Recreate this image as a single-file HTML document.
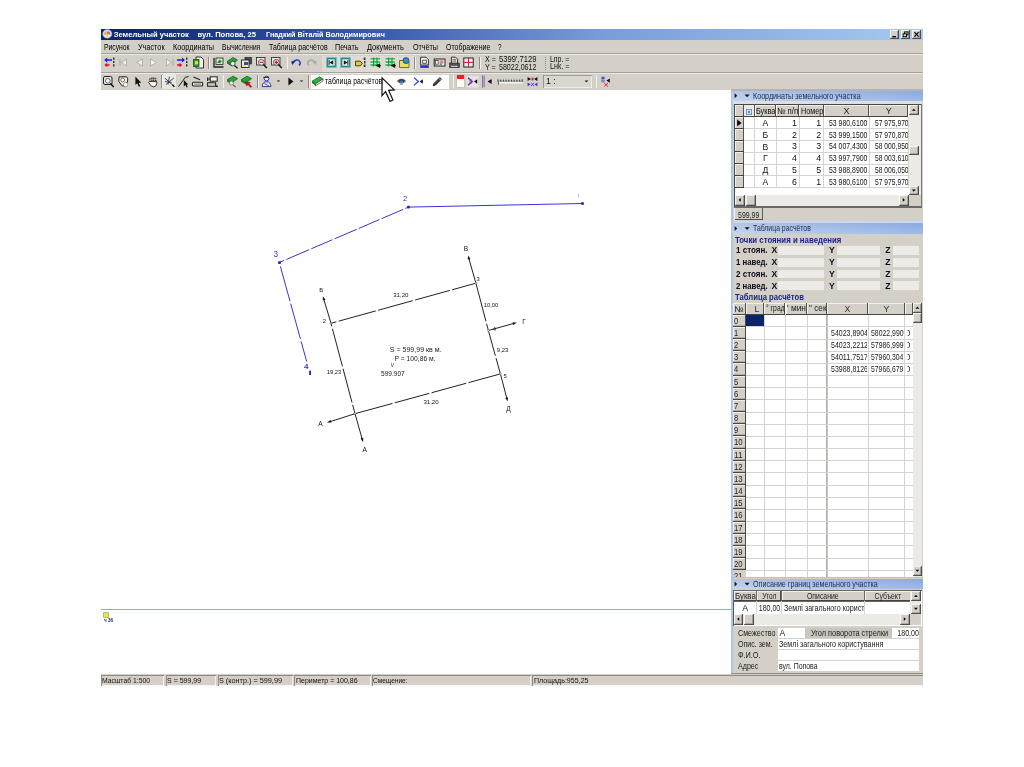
<!DOCTYPE html>
<html lang="ru"><head><meta charset="utf-8"><title>Земельный участок</title>
<style>
html,body{margin:0;padding:0;background:#fff}
body{width:1024px;height:767px;position:relative;overflow:hidden;font-family:"Liberation Sans",sans-serif;font-size:8px;color:#000}
.a{position:absolute;display:block}
.t{position:absolute;white-space:nowrap;display:block}
svg{overflow:visible}
svg text{font-family:"Liberation Sans",sans-serif}
#root{position:absolute;left:0;top:0;width:1024px;height:767px;will-change:transform}
</style></head><body><div id="root">
<div class="a" style="left:101px;top:29px;width:821.5px;height:657px;background:#d4d0c8;"></div>
<div class="a" style="left:101px;top:29px;width:821.5px;height:11px;background:linear-gradient(to right,#0a246a 0%,#3a5cb0 34%,#7a9cd8 61%,#a6caf0 100%);"></div>
<svg class="a" style="left:101.6px;top:29.3px" width="11" height="10" viewBox="0 0 11 10">
<ellipse cx="5.3" cy="4.9" rx="4.7" ry="4.4" fill="#d4dcec" stroke="#8a9ac8" stroke-width="0.5"/><ellipse cx="5.3" cy="4.9" rx="3.2" ry="3.1" fill="#ece9d0"/><path d="M5.3 4.9 L5.3 1.9 A3 3 0 0 1 8.2 5.7 Z" fill="#9a78c8"/><path d="M5.3 4.9 L2.4 5.9 A3 3 0 0 1 5.3 1.9 Z" fill="#e0a040"/><path d="M4.2 2.4 H6 V8 H4.2 Z" fill="#f4e060"/><path d="M4.9 3 H6 V5.4 H4.9 Z" fill="#e86848"/>
</svg>
<span class="t" style="font-size:7.6px;line-height:9.6px;left:113.7px;top:30px;color:#fff;font-weight:bold;">Земельный участок</span>
<span class="t" style="font-size:7.6px;line-height:9.6px;left:197.5px;top:30px;color:#fff;font-weight:bold;">вул. Попова, 25</span>
<span class="t" style="font-size:7.6px;line-height:9.6px;left:265.6px;top:30px;transform:scaleX(0.957);transform-origin:0 50%;color:#fff;font-weight:bold;">Гнадкий Віталій Володимирович</span>
<div class="a" style="left:890px;top:30px;width:9.3px;height:9px;background:#d4d0c8;box-shadow:inset -0.8px -0.8px 0 #404040,inset 0.8px 0.8px 0 #fff,inset -1.6px -1.6px 0 #808080;"></div>
<svg class="a" style="left:890px;top:30px" width="9.3" height="9" viewBox="0 0 9.3 9">
<rect x="2.4" y="6" width="3.6" height="1.3" fill="#000"/>
</svg>
<div class="a" style="left:900.5px;top:30px;width:9.3px;height:9px;background:#d4d0c8;box-shadow:inset -0.8px -0.8px 0 #404040,inset 0.8px 0.8px 0 #fff,inset -1.6px -1.6px 0 #808080;"></div>
<svg class="a" style="left:900.5px;top:30px" width="9.3" height="9" viewBox="0 0 9.3 9">
<rect x="3.6" y="1.9" width="3.4" height="2.9" fill="none" stroke="#000" stroke-width="0.9"/><rect x="2.1" y="3.8" width="3.4" height="2.9" fill="#d4d0c8" stroke="#000" stroke-width="0.9"/>
</svg>
<div class="a" style="left:912.2px;top:30px;width:9.3px;height:9px;background:#d4d0c8;box-shadow:inset -0.8px -0.8px 0 #404040,inset 0.8px 0.8px 0 #fff,inset -1.6px -1.6px 0 #808080;"></div>
<svg class="a" style="left:912.2px;top:30px" width="9.3" height="9" viewBox="0 0 9.3 9">
<path d="M2.4 2.2 L6.6 6.6 M6.6 2.2 L2.4 6.6" stroke="#000" stroke-width="1.15" fill="none"/>
</svg>
<span class="t" style="font-size:8.6px;line-height:10.6px;left:104.4px;top:41.6px;transform:scaleX(0.789);transform-origin:0 50%;color:#000;">Рисунок</span>
<span class="t" style="font-size:8.6px;line-height:10.6px;left:138.3px;top:41.6px;transform:scaleX(0.847);transform-origin:0 50%;color:#000;">Участок</span>
<span class="t" style="font-size:8.6px;line-height:10.6px;left:173px;top:41.6px;transform:scaleX(0.848);transform-origin:0 50%;color:#000;">Координаты</span>
<span class="t" style="font-size:8.6px;line-height:10.6px;left:222px;top:41.6px;transform:scaleX(0.772);transform-origin:0 50%;color:#000;">Вычисления</span>
<span class="t" style="font-size:8.6px;line-height:10.6px;left:269.2px;top:41.6px;transform:scaleX(0.811);transform-origin:0 50%;color:#000;">Таблица расчётов</span>
<span class="t" style="font-size:8.6px;line-height:10.6px;left:335.3px;top:41.6px;transform:scaleX(0.831);transform-origin:0 50%;color:#000;">Печать</span>
<span class="t" style="font-size:8.6px;line-height:10.6px;left:366.9px;top:41.6px;transform:scaleX(0.866);transform-origin:0 50%;color:#000;">Документь</span>
<span class="t" style="font-size:8.6px;line-height:10.6px;left:412.8px;top:41.6px;transform:scaleX(0.833);transform-origin:0 50%;color:#000;">Отчёты</span>
<span class="t" style="font-size:8.6px;line-height:10.6px;left:445.6px;top:41.6px;transform:scaleX(0.810);transform-origin:0 50%;color:#000;">Отображение</span>
<span class="t" style="font-size:8.6px;line-height:10.6px;left:498px;top:41.6px;transform:scaleX(0.732);transform-origin:0 50%;color:#000;">?</span>
<div class="a" style="left:101px;top:53px;width:821.5px;height:1px;background:#a4a29c;"></div>
<div class="a" style="left:101px;top:54px;width:821.5px;height:1px;background:#eceae5;"></div>
<div class="a" style="left:101px;top:72px;width:821.5px;height:1px;background:#a4a29c;"></div>
<div class="a" style="left:101px;top:73px;width:821.5px;height:1px;background:#eceae5;"></div>
<div class="a" style="left:321.5px;top:55.5px;width:92px;height:16px;background:#dedbd4;"></div>
<svg class="a" style="left:103px;top:55.8px" width="13" height="13" viewBox="0 0 13 13">
<path d="M9 3.2 H4.2 V1.6 L1.2 4 L4.2 6.4 V4.8 H9 Z" fill="#1020e0"/><path d="M6.5 8.2 H4.2 V6.8 L1.4 9 L4.2 11.2 V9.8 H6.5 Z" fill="#e01020"/><path d="M10.8 1.5 V11.5" stroke="#000" stroke-width="1.1" stroke-dasharray="2.2 1.2"/>
</svg>
<svg class="a" style="left:117.3px;top:55.8px" width="13" height="13" viewBox="0 0 13 13">
<path d="M3 3 V10" stroke="#a8a6a0" stroke-width="1"/><path d="M9.5 3 L4.5 6.5 L9.5 10 Z" fill="#f2f0ec" stroke="#a8a6a0" stroke-width="0.8"/>
</svg>
<svg class="a" style="left:132.7px;top:55.8px" width="13" height="13" viewBox="0 0 13 13">
<path d="M9.5 3 L3.5 6.5 L9.5 10 Z" fill="#f2f0ec" stroke="#a8a6a0" stroke-width="0.8"/>
</svg>
<svg class="a" style="left:147.1px;top:55.8px" width="13" height="13" viewBox="0 0 13 13">
<path d="M3.5 3 L9.5 6.5 L3.5 10 Z" fill="#f2f0ec" stroke="#a8a6a0" stroke-width="0.8"/>
</svg>
<svg class="a" style="left:162.5px;top:55.8px" width="13" height="13" viewBox="0 0 13 13">
<path d="M10 3 V10" stroke="#a8a6a0" stroke-width="1"/><path d="M3.5 3 L8.5 6.5 L3.5 10 Z" fill="#f2f0ec" stroke="#a8a6a0" stroke-width="0.8"/>
</svg>
<svg class="a" style="left:176.2px;top:55.8px" width="13" height="13" viewBox="0 0 13 13">
<path d="M1 3.2 H6 V1.6 L9 4 L6 6.4 V4.8 H1 Z" fill="#1020e0"/><path d="M1 8.2 H3.5 V6.8 L6.3 9 L3.5 11.2 V9.8 H1 Z" fill="#e01020"/><path d="M10.8 1.5 V11.5" stroke="#000" stroke-width="1.1" stroke-dasharray="2.2 1.2"/>
</svg>
<svg class="a" style="left:191.5px;top:55.8px" width="13" height="13" viewBox="0 0 13 13">
<path d="M4 1 H9 L11.5 3.5 V12 H4 Z" fill="#f4f4f0" stroke="#222" stroke-width="0.9"/><rect x="1.5" y="3.5" width="5.5" height="7" fill="#2c9a2c" stroke="#0a4a0a" stroke-width="0.7"/><rect x="3" y="5.2" width="3" height="3.2" fill="#e8e040"/>
</svg>
<div class="a" style="left:207.9px;top:56.5px;width:0.8px;height:12px;background:#8c8a84;"></div>
<div class="a" style="left:208.7px;top:56.5px;width:0.8px;height:12px;background:#f4f2ee;"></div>
<svg class="a" style="left:211.7px;top:55.8px" width="13" height="13" viewBox="0 0 13 13">
<path d="M2 2 V11 H11.5" fill="none" stroke="#222" stroke-width="1.3"/><rect x="4" y="2" width="7" height="6.5" fill="#e8e8e0" stroke="#222" stroke-width="0.8"/><path d="M5 6.5 L7.5 3.5 L10 5.2 L8 7.5 Z" fill="#1c9a30"/>
</svg>
<svg class="a" style="left:226px;top:55.8px" width="13" height="13" viewBox="0 0 13 13">
<path d="M1 5.5 L7 1.5 L11.5 4 L6 8.5 Z" fill="#22a832" stroke="#0c5a14" stroke-width="0.7"/><path d="M1 5.5 V7.5 L6 10.5 V8.5" fill="#157a22"/><circle cx="6.8" cy="7.6" r="2.3" fill="#e8f0e8" stroke="#333" stroke-width="0.8"/><path d="M8.5 9.5 L11.5 12.2" stroke="#111" stroke-width="1.3"/>
</svg>
<svg class="a" style="left:240.4px;top:55.8px" width="13" height="13" viewBox="0 0 13 13">
<rect x="5" y="1.5" width="6.5" height="6.5" fill="#444a58" stroke="#222" stroke-width="0.7"/><rect x="1.5" y="4" width="7.5" height="7.5" fill="#ecece4" stroke="#222" stroke-width="0.9"/><rect x="4" y="6" width="4" height="3" fill="#3a4a8a"/><rect x="2.6" y="9" width="3" height="1.8" fill="#e8e040"/>
</svg>
<svg class="a" style="left:255.4px;top:55.8px" width="13" height="13" viewBox="0 0 13 13">
<rect x="1.5" y="1.5" width="8.5" height="7.5" fill="#eceae4" stroke="#333" stroke-width="0.9"/><circle cx="6.3" cy="6.3" r="2.9" fill="#f4e8e8" stroke="#444" stroke-width="0.8"/><path d="M8.4 8.6 L11.8 12" stroke="#111" stroke-width="1.4"/><path d="M4.6 6.3 H8" stroke="#e01020" stroke-width="1.2"/>
</svg>
<svg class="a" style="left:270.1px;top:55.8px" width="13" height="13" viewBox="0 0 13 13">
<rect x="1.5" y="1.5" width="8.5" height="7.5" fill="#eceae4" stroke="#333" stroke-width="0.9"/><circle cx="6.3" cy="6.3" r="2.9" fill="#f4e8e8" stroke="#444" stroke-width="0.8"/><path d="M8.4 8.6 L11.8 12" stroke="#111" stroke-width="1.4"/><path d="M4.6 6.3 H8 M6.3 4.6 V8" stroke="#e01020" stroke-width="1.2"/>
</svg>
<div class="a" style="left:286.5px;top:56.5px;width:0.8px;height:12px;background:#8c8a84;"></div>
<div class="a" style="left:287.3px;top:56.5px;width:0.8px;height:12px;background:#f4f2ee;"></div>
<svg class="a" style="left:289.7px;top:55.8px" width="13" height="13" viewBox="0 0 13 13">
<path d="M3.2 6.5 C4 3.5 8.5 3 9.8 5.5 C10.6 7.2 10 8.6 9 9.3" fill="none" stroke="#2a3cc0" stroke-width="1.5"/><path d="M1.2 5.2 L5.6 5.2 L2.2 9 Z" fill="#1a2890"/>
</svg>
<svg class="a" style="left:305px;top:55.8px" width="13" height="13" viewBox="0 0 13 13">
<path d="M9.8 6.5 C9 3.5 4.5 3 3.2 5.5 C2.4 7.2 3 8.6 4 9.3" fill="none" stroke="#a8a6a0" stroke-width="1.5"/><path d="M11.8 5.2 L7.4 5.2 L10.8 9 Z" fill="#a8a6a0"/>
</svg>
<svg class="a" style="left:324.5px;top:55.8px" width="13" height="13" viewBox="0 0 13 13">
<rect x="1.2" y="1.2" width="10.6" height="10.6" fill="#38c8c8"/><rect x="2.8" y="2.8" width="7.4" height="7.4" fill="#f0f0ec" stroke="#1c5a5a" stroke-width="0.9"/><path d="M8.2 4.2 L4.4 6.5 L8.2 8.8 Z" fill="#111"/><path d="M4.2 4.2 V8.8" stroke="#111" stroke-width="0.9"/>
</svg>
<svg class="a" style="left:338.9px;top:55.8px" width="13" height="13" viewBox="0 0 13 13">
<rect x="1.2" y="1.2" width="10.6" height="10.6" fill="#38c8c8"/><rect x="2.8" y="2.8" width="7.4" height="7.4" fill="#f0f0ec" stroke="#1c5a5a" stroke-width="0.9"/><path d="M4.8 4.2 L8.6 6.5 L4.8 8.8 Z" fill="#111"/><path d="M8.8 4.2 V8.8" stroke="#111" stroke-width="0.9"/>
</svg>
<svg class="a" style="left:354.3px;top:55.8px" width="13" height="13" viewBox="0 0 13 13">
<path d="M1.5 5.2 H6 L8.5 7.5 L6 9.8 H1.5 Z" fill="#e0d020" stroke="#3a3000" stroke-width="0.9"/><path d="M10.8 1.5 V11.5" stroke="#111" stroke-width="1.2" stroke-dasharray="2.4 1.1"/><path d="M10.8 3 h-1.6 M10.8 10 h-1.6" stroke="#c01010" stroke-width="0.9"/>
</svg>
<svg class="a" style="left:369.2px;top:55.8px" width="13" height="13" viewBox="0 0 13 13">
<rect x="1.5" y="2.2" width="9.5" height="7.2" fill="#e8f4e8"/><path d="M1.5 2.8 H11 M1.5 6 H11 M1.5 9 H11 M4.6 1.5 V10.5 M8 1.5 V10.5" stroke="#18a838" stroke-width="1.3" fill="none"/><path d="M6.5 7.2 L11.2 9.6 L6.5 12 Z" fill="#111" transform="translate(17.7,0) scale(-1,1)"/><path d="M9.3 9.6 H11.8" stroke="#111" stroke-width="1"/>
</svg>
<svg class="a" style="left:384px;top:55.8px" width="13" height="13" viewBox="0 0 13 13">
<rect x="1.5" y="2.2" width="9.5" height="7.2" fill="#e8f4e8"/><path d="M1.5 2.8 H11 M1.5 6 H11 M1.5 9 H11 M4.6 1.5 V10.5 M8 1.5 V10.5" stroke="#18a838" stroke-width="1.3" fill="none"/><path d="M6.5 7.2 L11.2 9.6 L6.5 12 Z" fill="#111" transform="translate(17.7,0) scale(-1,1)"/><path d="M9.3 9.6 H11.8" stroke="#111" stroke-width="1"/>
</svg>
<svg class="a" style="left:398.3px;top:55.8px" width="13" height="13" viewBox="0 0 13 13">
<path d="M1.5 4.5 H5 L6 5.8 H11 V11.5 H1.5 Z" fill="#ece060" stroke="#5a5000" stroke-width="0.8"/><circle cx="8" cy="4.6" r="3.1" fill="#3a7ad8" stroke="#1a3a80" stroke-width="0.6"/><path d="M6.2 4 Q8 2.2 9.8 4.2 Q8.6 6 6.6 5.6 Z" fill="#38b048"/>
</svg>
<div class="a" style="left:414.1px;top:56.5px;width:0.8px;height:12px;background:#8c8a84;"></div>
<div class="a" style="left:414.9px;top:56.5px;width:0.8px;height:12px;background:#f4f2ee;"></div>
<svg class="a" style="left:418.2px;top:55.8px" width="13" height="13" viewBox="0 0 13 13">
<path d="M2.6 1.2 H8 L10.4 3.6 V9 H2.6 Z" fill="#f2f2ee" stroke="#222" stroke-width="0.9"/><path d="M4.6 4.2 H8.4 V7.4 H4.6 Z" fill="none" stroke="#333" stroke-width="0.8"/><rect x="2.2" y="9.6" width="8.6" height="2.2" fill="#2a2ac0"/>
</svg>
<svg class="a" style="left:433.2px;top:55.8px" width="13" height="13" viewBox="0 0 13 13">
<rect x="1.2" y="3" width="10.8" height="7" fill="#f2f2ee" stroke="#222" stroke-width="1"/><rect x="2.6" y="4.6" width="2.6" height="3.6" fill="none" stroke="#333" stroke-width="0.7"/><path d="M6.6 5 H10.4 M6.6 6.8 H10.4" stroke="#c03030" stroke-width="0.9"/><path d="M6.6 8.2 H9" stroke="#333" stroke-width="0.8"/>
</svg>
<svg class="a" style="left:447.5px;top:55.8px" width="13" height="13" viewBox="0 0 13 13">
<path d="M3.4 1.2 H7.6 L9.6 3.2 V8 H3.4 Z" fill="#e8e8e4" stroke="#222" stroke-width="0.9"/><path d="M4.6 3.6 H8.2 M4.6 5.2 H8.2" stroke="#333" stroke-width="0.7"/><rect x="1.6" y="7" width="9.8" height="4.6" fill="#50505a" stroke="#222" stroke-width="0.6"/><rect x="3" y="9.8" width="6.6" height="1.2" fill="#c8c8c4"/>
</svg>
<svg class="a" style="left:461.9px;top:55.8px" width="13" height="13" viewBox="0 0 13 13">
<rect x="1.8" y="2" width="9.4" height="9" fill="#f6ecec" stroke="#222" stroke-width="1"/><path d="M1.8 6.5 H11.2 M6.5 2 V11" stroke="#d82030" stroke-width="1"/>
</svg>
<div class="a" style="left:479.3px;top:56.5px;width:0.8px;height:12px;background:#8c8a84;"></div>
<div class="a" style="left:480.1px;top:56.5px;width:0.8px;height:12px;background:#f4f2ee;"></div>
<span class="t" style="font-size:8.8px;line-height:10.8px;left:485.3px;top:54.2px;transform:scaleX(0.803);transform-origin:0 50%;color:#111;">X =</span>
<span class="t" style="font-size:8.8px;line-height:10.8px;left:498.9px;top:54.2px;transform:scaleX(0.864);transform-origin:0 50%;color:#111;">5399&#x27;,7129</span>
<span class="t" style="font-size:8.8px;line-height:10.8px;left:485.3px;top:61.6px;transform:scaleX(0.812);transform-origin:0 50%;color:#111;">Y =</span>
<span class="t" style="font-size:8.8px;line-height:10.8px;left:498.9px;top:61.6px;transform:scaleX(0.804);transform-origin:0 50%;color:#111;">58022,0612</span>
<div class="a" style="left:545px;top:56.5px;width:0;height:13px;border-left:1px dotted #8c8a84"></div>
<span class="t" style="font-size:8.2px;line-height:10.2px;left:549.8px;top:54.5px;transform:scaleX(0.847);transform-origin:0 50%;color:#111;">Lпр. =</span>
<span class="t" style="font-size:8.2px;line-height:10.2px;left:549.8px;top:61.9px;transform:scaleX(0.881);transform-origin:0 50%;color:#111;">Lнк. =</span>
<svg class="a" style="left:102px;top:74.8px" width="13" height="13" viewBox="0 0 13 13">
<rect x="1.5" y="1.5" width="8.5" height="8" rx="1.5" fill="#eceae4" stroke="#222" stroke-width="1"/><circle cx="5.8" cy="5.8" r="2.4" fill="#f8f8f4" stroke="#444" stroke-width="0.8"/><path d="M8.2 8.4 L11.8 12" stroke="#111" stroke-width="1.5"/>
</svg>
<svg class="a" style="left:116.9px;top:74.8px" width="13" height="13" viewBox="0 0 13 13">
<path d="M2 1.8 H9.6 Q11.4 3.6 10.6 6 L8.6 10.8 H5 L1.8 6.4 Z" fill="#eceae4" stroke="#222" stroke-width="1"/><circle cx="5.6" cy="5" r="1.9" fill="#f8f8f4" stroke="#444" stroke-width="0.7"/><circle cx="8.6" cy="9.6" r="2.2" fill="#fbfbf8" stroke="#555" stroke-width="0.5"/>
</svg>
<svg class="a" style="left:131.3px;top:74.8px" width="13" height="13" viewBox="0 0 13 13">
<path d="M4.4 1.6 V10 L6.3 8.2 L7.8 11.8 L9.2 11.2 L7.7 7.7 H10.2 Z" fill="#111"/>
</svg>
<svg class="a" style="left:146.7px;top:74.8px" width="13" height="13" viewBox="0 0 13 13">
<path d="M3 6.8 V3.2 M4.9 6 V1.8 M6.8 6 V1.8 M8.7 6.4 V2.6" stroke="#222" stroke-width="1.2" stroke-dasharray="1.4 0.7"/><path d="M2.2 6.6 H9.8 V8.2 Q9.8 11.8 6.8 11.8 Q4 11.8 3.2 9.4 L1.4 7.4 Z" fill="#f8f8f4" stroke="#222" stroke-width="0.9"/>
</svg>
<div class="a" style="left:161px;top:75.2px;width:0.8px;height:12.6px;background:#8c8a84;"></div>
<div class="a" style="left:161.8px;top:75.2px;width:0.8px;height:12.6px;background:#f4f2ee;"></div>
<div class="a" style="left:162.6px;top:74.4px;width:13.2px;height:14.4px;background:#e9e7e2;"></div>
<svg class="a" style="left:162.5px;top:74.8px" width="13" height="13" viewBox="0 0 13 13">
<path d="M2 3.2 L10.6 11 M6.4 1.8 L5 9.6 M10.8 3 L3 9.4 M2.2 6.6 L8.6 7.4" stroke="#30344a" stroke-width="0.9" fill="none"/><path d="M9.4 9.8 L11.4 11.8" stroke="#111" stroke-width="1.3"/>
</svg>
<svg class="a" style="left:176.8px;top:74.8px" width="13" height="13" viewBox="0 0 13 13">
<path d="M1.6 11.6 L8.2 2.4 L11.6 1.6" fill="none" stroke="#222" stroke-width="1"/><path d="M6.8 5 V11.4 L8.4 9.9 L9.6 12.4 L10.7 11.9 L9.5 9.4 H11.4 Z" fill="#111"/>
</svg>
<svg class="a" style="left:191.2px;top:74.8px" width="13" height="13" viewBox="0 0 13 13">
<path d="M2.4 2 L9 4.8" stroke="#222" stroke-width="1.2"/><rect x="1.4" y="7.2" width="10.2" height="3.8" rx="1" fill="#f0f0ec" stroke="#222" stroke-width="1.1"/><path d="M3 9.1 H10" stroke="#555" stroke-width="0.8"/>
</svg>
<svg class="a" style="left:206.1px;top:74.8px" width="13" height="13" viewBox="0 0 13 13">
<rect x="4.2" y="1.8" width="7" height="4.4" fill="#f4f4f0" stroke="#222" stroke-width="1"/><path d="M1.4 4 H4.2 M1.6 2.4 V6 M1.6 7.8 H9.6 V11.2 H1.6 Z" fill="none" stroke="#222" stroke-width="1.1"/><circle cx="10.9" cy="11.2" r="0.9" fill="#111"/>
</svg>
<div class="a" style="left:222.5px;top:75.2px;width:0.8px;height:12.6px;background:#8c8a84;"></div>
<div class="a" style="left:223.3px;top:75.2px;width:0.8px;height:12.6px;background:#f4f2ee;"></div>
<svg class="a" style="left:225.6px;top:74.8px" width="13" height="13" viewBox="0 0 13 13">
<path d="M1 4.8 L7 1.2 L11.6 3.6 L6 7.8 Z" fill="#22a832" stroke="#0c5a14" stroke-width="0.7"/><path d="M1 4.8 V6.6 L6 9.6 V7.8" fill="#157a22"/><circle cx="5.4" cy="8" r="2" fill="#e8f0e8" stroke="#666" stroke-width="0.7"/><path d="M7 9.8 L9.6 12.2" stroke="#555" stroke-width="1.1"/>
</svg>
<svg class="a" style="left:240.4px;top:74.8px" width="13" height="13" viewBox="0 0 13 13">
<path d="M1 4.8 L7 1.2 L11.6 3.6 L6 7.8 Z" fill="#22a832" stroke="#0c5a14" stroke-width="0.7"/><path d="M1 4.8 V6.6 L6 9.6 V7.8" fill="#157a22"/><path d="M5.6 6.8 L10.4 7.6 L9 8.8 L11.8 11.6 L10.6 12.6 L8 9.8 L6.6 11 Z" fill="#c81818" stroke="#600" stroke-width="0.4"/>
</svg>
<div class="a" style="left:256.7px;top:75.2px;width:0.8px;height:12.6px;background:#8c8a84;"></div>
<div class="a" style="left:257.5px;top:75.2px;width:0.8px;height:12.6px;background:#f4f2ee;"></div>
<svg class="a" style="left:260.3px;top:74.8px" width="13" height="13" viewBox="0 0 13 13">
<circle cx="6.6" cy="3.6" r="2.3" fill="#e8ecf8" stroke="#2a3aa0" stroke-width="1"/><path d="M2.2 11.6 Q2.4 6.8 6.6 6.8 Q10.8 6.8 11 11.6 Z" fill="#e8ecf8" stroke="#2a3aa0" stroke-width="1"/><path d="M4.4 8.6 L8.8 10.8" stroke="#2a3aa0" stroke-width="0.9"/><path d="M3.2 2.4 H9" stroke="#222" stroke-width="0.9"/>
</svg>
<svg class="a" style="left:272.2px;top:75.4px" width="13" height="13" viewBox="0 0 13 13">
<path d="M4.8 5.4 H8.2 L6.5 7.1 Z" fill="#111"/>
</svg>
<svg class="a" style="left:283.5px;top:74.8px" width="13" height="13" viewBox="0 0 13 13">
<path d="M4.4 2.6 L9.4 6.5 L4.4 10.4 Z" fill="#111"/>
</svg>
<svg class="a" style="left:294.8px;top:75.4px" width="13" height="13" viewBox="0 0 13 13">
<path d="M4.8 5.4 H8.2 L6.5 7.1 Z" fill="#111"/>
</svg>
<div class="a" style="left:308.1px;top:75.2px;width:0.8px;height:12.6px;background:#8c8a84;"></div>
<div class="a" style="left:308.9px;top:75.2px;width:0.8px;height:12.6px;background:#f4f2ee;"></div>
<div class="a" style="left:310.5px;top:74.8px;width:138.5px;height:14px;background:#fff;"></div>
<svg class="a" style="left:311.3px;top:74.6px" width="13" height="13" viewBox="0 0 13 13">
<path d="M1 6.2 L8.6 1.8 L12 4 L4.6 8.8 Z" fill="#2cb43c" stroke="#0c5a14" stroke-width="0.7"/><path d="M1 6.2 V8 L4.6 10.8 V8.8" fill="#157a22"/><path d="M4.6 8.8 L12 4 V6 L4.6 10.8 Z" fill="#f4f4f0" stroke="#222" stroke-width="0.6"/>
</svg>
<span class="t" style="font-size:8.8px;line-height:10.8px;left:324.9px;top:76px;transform:scaleX(0.784);transform-origin:0 50%;color:#000;">таблица расчётов</span>
<svg class="a" style="left:394.9px;top:74.8px" width="13" height="13" viewBox="0 0 13 13">
<path d="M2 6.2 Q6.5 2 11 6.2 Q6.5 10 2 6.2 Z" fill="#e8d86a" stroke="#7a6a20" stroke-width="0.7"/><path d="M3 5.4 Q6.5 2.6 10 5.4 L8.6 7.8 H4.4 Z" fill="#2a3a70"/><circle cx="6.5" cy="7" r="1.5" fill="#3a7ad8"/><path d="M5 9.4 H8" stroke="#999" stroke-width="1"/>
</svg>
<svg class="a" style="left:411.7px;top:74.8px" width="13" height="13" viewBox="0 0 13 13">
<path d="M2 2.6 L6.4 6.5 L2 10.4" fill="none" stroke="#2a3ae0" stroke-width="1.2"/><path d="M10.8 4.2 L7.6 6.5 L10.8 8.8 Z" fill="#111"/>
</svg>
<svg class="a" style="left:430.8px;top:74.8px" width="13" height="13" viewBox="0 0 13 13">
<path d="M2.2 10.8 L3 8.4 L8.8 2.6 L10.4 4.2 L4.6 10 Z" fill="#444" stroke="#111" stroke-width="0.8"/><path d="M8 3.4 L9.6 5" stroke="#ddd" stroke-width="0.7"/>
</svg>
<div class="a" style="left:452.6px;top:75.2px;width:0.8px;height:12.6px;background:#8c8a84;"></div>
<div class="a" style="left:453.4px;top:75.2px;width:0.8px;height:12.6px;background:#f4f2ee;"></div>
<div class="a" style="left:457.4px;top:74.6px;width:6.6px;height:12.6px;background:#fbfbfa;box-shadow:0 0 0 0.6px #c4c1ba;"></div>
<div class="a" style="left:457.4px;top:74.6px;width:6.6px;height:4.2px;background:#ee1c24;"></div>
<svg class="a" style="left:466.1px;top:74.8px" width="13" height="13" viewBox="0 0 13 13">
<rect x="0.6" y="1" width="11.8" height="11.4" fill="#e6e2e6"/><path d="M2 2.8 L6.4 6.5 L2 10.2" fill="none" stroke="#2a3ae0" stroke-width="1.2"/><path d="M11.2 4.2 L8 6.5 L11.2 8.8 Z" fill="#111"/><path d="M3 4.4 L5.6 8.6 M5.6 4.4 L3 8.6" stroke="#e03040" stroke-width="0.7"/>
</svg>
<div class="a" style="left:482.4px;top:75.2px;width:0.8px;height:12.6px;background:#8c8a84;"></div>
<div class="a" style="left:483.2px;top:75.2px;width:0.8px;height:12.6px;background:#f4f2ee;"></div>
<svg class="a" style="left:481.1px;top:74.8px" width="13" height="13" viewBox="0 0 13 13">
<path d="M3 0.6 V12.4" stroke="#4a50e0" stroke-width="1"/><path d="M1.6 0.6 V12.4" stroke="#e04a5a" stroke-width="0.7" stroke-dasharray="1.2 1"/><path d="M10.6 4 L6.6 6.5 L10.6 9 Z" fill="#111"/>
</svg>
<svg class="a" style="left:496.5px;top:75px" width="27" height="13" viewBox="0 0 27 13">
<path d="M1 7.6 H25.2" stroke="#f8f8f6" stroke-width="1.6"/><path d="M1 4.2 V6.8 M3.7 4.6 V6.4 M6.4 4.6 V6.4 M9.1 4.6 V6.4 M11.8 4.6 V6.4 M14.5 4.6 V6.4 M17.2 4.6 V6.4 M19.9 4.6 V6.4 M22.6 4.6 V6.4 M25.2 4.2 V6.8" stroke="#333" stroke-width="0.9"/><path d="M1 6.2 H25.2" stroke="#555" stroke-width="0.6"/><path d="M1.4 7 V9.6" stroke="#333" stroke-width="0.8"/>
</svg>
<svg class="a" style="left:526.3px;top:74.8px" width="13" height="13" viewBox="0 0 13 13">
<path d="M1.6 2 L5 4 L1.6 6 Z M11.4 2 L8 4 L11.4 6 Z" fill="#111"/><path d="M5.4 2.6 H7.6 V5.4 H5.4 Z" fill="#e03040"/><path d="M1.6 7.6 L4.6 9.4 L1.6 11.2 Z M11.4 7.6 L8.4 9.4 L11.4 11.2 Z" fill="#2a3ae0"/><path d="M5.2 7.8 L7.8 11 M7.8 7.8 L5.2 11" stroke="#2a3ae0" stroke-width="0.8"/>
</svg>
<div class="a" style="left:543px;top:75.2px;width:48.6px;height:12.6px;background:#d9d6cf;box-shadow:inset 0.8px 0.8px 0 #8c8a84, inset -0.8px -0.8px 0 #f4f2ee;"></div>
<span class="t" style="font-size:8.6px;line-height:10.6px;left:546px;top:76.2px;color:#111;">1 :</span>
<svg class="a" style="left:580.3px;top:75.2px" width="13" height="13" viewBox="0 0 13 13">
<path d="M4.6 5.4 H8.4 L6.5 7.3 Z" fill="#111"/>
</svg>
<div class="a" style="left:595.6px;top:75.2px;width:0.8px;height:12.6px;background:#8c8a84;"></div>
<div class="a" style="left:596.4px;top:75.2px;width:0.8px;height:12.6px;background:#f4f2ee;"></div>
<svg class="a" style="left:599.3px;top:74.8px" width="13" height="13" viewBox="0 0 13 13">
<path d="M2.4 1.8 H5.6 V4.4 H2.4 Z" fill="#4a50c0"/><path d="M2.2 5.6 H5.8 M2.2 6.8 H5.8" stroke="#4a50c0" stroke-width="0.7"/><path d="M10.8 3.4 L7.4 5.6 L10.8 7.8 Z" fill="#111"/><path d="M5.2 8 L9 11.6 M9 8 L5.2 11.6" stroke="#e03040" stroke-width="1"/>
</svg>
<div class="a" style="left:101px;top:89.6px;width:630px;height:584.4px;background:#fff;"></div>
<div class="a" style="left:101px;top:608.8px;width:630px;height:1.1px;background:#86afe8;"></div>
<div class="a" style="left:103.9px;top:612.9px;width:4.4px;height:4.2px;background:#eeec2c;box-shadow:0 0 0 0.6px #8a8420;"></div>
<span class="t" style="font-size:5px;line-height:7px;left:104px;top:616.8px;transform:scaleX(0.913);transform-origin:0 50%;color:#1c2a6a;font-weight:bold;">ч 36</span>
<svg class="a" style="left:0px;top:0px" width="1024" height="767" viewBox="0 0 1024 767">
<g fill="none" stroke="#3834d6" stroke-width="1" stroke-linecap="butt">
<path d="M582.4 203.5 L408.5 207.1"/>
<path d="M279.3 262.5 L408.5 207.1" stroke-dasharray="5.4 2.4 24.6 2.4 23 2.4 23.9 2.4 22.3 2.4 23.6 2.4 10"/>
<path d="M279.3 262.5 L306.7 361.6" stroke-dasharray="1.5 2.5 36.2 2.4 36.8 2.4 30"/>
</g>
<g fill="#2222b4">
<rect x="581.2" y="202.2" width="2.6" height="2.6"/><rect x="407.2" y="205.8" width="2.6" height="2.6"/><rect x="278.2" y="261.3" width="2.6" height="2.6"/><rect x="309.2" y="370.6" width="1.8" height="4.4"/>
</g>
<g fill="#3834d6" font-size="7.6px">
<text x="403" y="201.4">2</text><text x="273.6" y="257" font-size="8.2px">3</text><text x="304" y="369.4" font-weight="bold" font-size="8px">4</text>
<text x="577.4" y="196.6" font-size="4px" fill="#8088c8">1</text>
</g>
<g fill="none" stroke="#161616" stroke-width="0.95">
<path d="M331 323.3 L475.9 283.2" stroke-dasharray="5.6 2.4 38.5 2.4 36 2.4 36 2.4 100"/>
<path d="M475.9 283.2 L488.4 330.5" stroke-dasharray="39.5 2.4 100"/>
<path d="M488.4 330.5 L500.4 373.9" stroke-dasharray="26.2 2.4 100"/>
<path d="M500.4 373.9 L355 413.7" stroke-dasharray="33 2.4 35.9 2.4 35.8 2.4 100"/>
<path d="M331 323.3 L355 413.7" stroke-dasharray="3.2 2.4 39 2.4 35 2.4 100"/>
<path d="M331 323.3 L323.6 298.6"/>
<path d="M475.9 283.2 L468.6 257.6"/>
<path d="M488.4 330.5 L514.6 323.2"/>
<path d="M500.4 373.9 L507 399"/>
<path d="M355 413.7 L329.4 421.9"/>
<path d="M355 413.7 L362.4 439.8"/>
</g>
<path d="M322.9 296.2 L325.4 299.84 L322.81 300.61 Z" fill="#111"/>
<path d="M468 255.4 L470.45 259.07 L467.85 259.81 Z" fill="#111"/>
<path d="M516.9 322.6 L513.21 325.02 L512.49 322.42 Z" fill="#111"/>
<path d="M507.7 401.6 L505.32 397.88 L507.94 397.19 Z" fill="#111"/>
<path d="M327 422.6 L330.59 420.04 L331.41 422.61 Z" fill="#111"/>
<path d="M363.1 442.2 L360.65 438.53 L363.25 437.79 Z" fill="#111"/>
<g fill="#fff" stroke="#444" stroke-width="0.5">
<circle cx="331" cy="323.3" r="0.9"/>
<circle cx="475.9" cy="283.2" r="0.9"/>
<circle cx="488.4" cy="330.5" r="0.9"/>
<circle cx="500.4" cy="373.9" r="0.9"/>
<circle cx="355" cy="413.7" r="0.9"/>
</g>
<g fill="#151515" font-size="6px" text-anchor="middle">
<text x="321.2" y="291.5" font-size="6.2px">Б</text>
<text x="465.9" y="250.9" font-size="6.6px">В</text>
<text x="524" y="323.7" font-size="6.6px">Г</text>
<text x="508.6" y="411.3" font-size="6.6px">Д</text>
<text x="320.4" y="425.9" font-size="6.6px">А</text>
<text x="364.6" y="451.5" font-size="6.6px">А</text>
<text x="324.4" y="323.3" font-size="5.8px">2</text>
<text x="478" y="280.5" font-size="5.8px">3</text>
<text x="494.4" y="330.9" font-size="5.8px">4</text>
<text x="505.2" y="377.9" font-size="5.8px">5</text>
<text x="400.8" y="297.2" font-size="6.1px">31,20</text>
<text x="431" y="404.3" font-size="6.1px">31,20</text>
<text x="491" y="306.6" font-size="5.8px">10,00</text>
<text x="502.6" y="352.2" font-size="5.9px">9,23</text>
<text x="334" y="374" font-size="5.8px">19,23</text>
</g><g fill="#222">
<text x="389.8" y="352.2" font-size="7.2px" textLength="51.8" lengthAdjust="spacingAndGlyphs">S = 599,99 кв м.</text>
<text x="394.6" y="361" font-size="7.2px" textLength="40.9" lengthAdjust="spacingAndGlyphs">P = 100,86 м.</text>
<text x="390.8" y="366.7" font-size="5.8px" textLength="3.2" lengthAdjust="spacingAndGlyphs" font-style="italic" fill="#111">V</text>
<text x="381" y="376" font-size="6.9px" textLength="23.7" lengthAdjust="spacingAndGlyphs">599.907</text>
</g>
</svg>
<div class="a" style="left:731px;top:89.6px;width:191.5px;height:584.4px;background:#d4d0c8;"></div>
<div class="a" style="left:731px;top:89.4px;width:191.5px;height:1.8px;background:#b4b4b2;"></div>
<div class="a" style="left:731px;top:91px;width:1.8px;height:583px;background:#a9c6ee;"></div>
<div class="a" style="left:732px;top:91.1px;width:190.5px;height:9.6px;background:linear-gradient(to bottom,rgba(20,30,80,0.07),rgba(255,255,255,0.08)),linear-gradient(to right,#c0d2f0 0%,#aac2ec 50%,#96b4e8 100%);"></div>
<svg class="a" style="left:732px;top:91.1px" width="30" height="9.6" viewBox="0 0 30 9.6">
<path d="M2.6 2.3 L5.2 4.8 L2.6 7.3 Z" fill="#111"/>
<path d="M12.6 3.6 H17.6 L15.1 6.3 Z" fill="#111"/>
</svg>
<span class="t" style="font-size:8.4px;line-height:10.4px;left:753.4px;top:90.9px;transform:scaleX(0.853);transform-origin:0 50%;color:#1c2c50;">Координаты земельного участка</span>
<div class="a" style="left:732.8px;top:100.7px;width:189.7px;height:3px;background:#dedfe2;"></div>
<div class="a" style="left:734.2px;top:104px;width:188.2px;height:103.4px;background:#fff;box-shadow:inset 1px 1px 0 #4a4844, inset -1px -1px 0 #f6f4f0;"></div>
<div class="a" style="left:735px;top:104.8px;width:8.8px;height:12.4px;background:#d4d0c8;box-shadow:inset -0.9px -1.1px 0 #45433f,inset 0.8px 0.8px 0 #fbfaf8;"></div>
<div class="a" style="left:743.8px;top:104.8px;width:10.8px;height:12.4px;background:#eceae6;box-shadow:inset -0.9px -1.1px 0 #45433f;"></div>
<div class="a" style="left:746px;top:108.7px;width:6px;height:6px;background:#cfe0f4;box-shadow:inset 0 0 0 0.7px #5a86c8;"></div>
<svg class="a" style="left:746px;top:108.7px" width="6" height="6" viewBox="0 0 6 6">
<path d="M1.8 1.8 L4.2 4.2 M4.2 1.8 L1.8 4.2" stroke="#3a66b0" stroke-width="0.7"/>
</svg>
<div class="a" style="left:754.6px;top:104.8px;width:21.4px;height:12.4px;background:#d4d0c8;box-shadow:inset -0.9px -1.1px 0 #45433f,inset 0.8px 0.8px 0 #fbfaf8;"></div>
<span class="t" style="font-size:8.6px;line-height:10.6px;left:755.8px;top:106.1px;transform:scaleX(0.843);transform-origin:0 50%;color:#111;">Буква</span>
<div class="a" style="left:776px;top:104.8px;width:23.3px;height:12.4px;background:#d4d0c8;box-shadow:inset -0.9px -1.1px 0 #45433f,inset 0.8px 0.8px 0 #fbfaf8;"></div>
<span class="t" style="font-size:8.6px;line-height:10.6px;left:777.2px;top:106.1px;transform:scaleX(0.905);transform-origin:0 50%;color:#111;">№ п/п</span>
<div class="a" style="left:799.3px;top:104.8px;width:24.5px;height:12.4px;background:#d4d0c8;box-shadow:inset -0.9px -1.1px 0 #45433f,inset 0.8px 0.8px 0 #fbfaf8;"></div>
<span class="t" style="font-size:8.6px;line-height:10.6px;left:800.5px;top:106.1px;transform:scaleX(0.842);transform-origin:0 50%;color:#111;">Номер</span>
<div class="a" style="left:823.8px;top:104.8px;width:45.3px;height:12.4px;background:#d4d0c8;box-shadow:inset -0.9px -1.1px 0 #45433f,inset 0.8px 0.8px 0 #fbfaf8;"></div>
<span class="t" style="font-size:9px;line-height:11px;left:843.45px;top:105.7px;color:#222;">X</span>
<div class="a" style="left:869.1px;top:104.8px;width:39.1px;height:12.4px;background:#d4d0c8;box-shadow:inset -0.9px -1.1px 0 #45433f,inset 0.8px 0.8px 0 #fbfaf8;"></div>
<span class="t" style="font-size:9px;line-height:11px;left:885.65px;top:105.7px;color:#222;">Y</span>
<div class="a" style="left:735px;top:117.2px;width:8.8px;height:11.72px;background:#d4d0c8;box-shadow:inset -0.9px -1.1px 0 #45433f,inset 0.8px 0.8px 0 #fbfaf8;"></div>
<svg class="a" style="left:735px;top:117.2px" width="9" height="11.72" viewBox="0 0 9 11.72">
<path d="M2.2 2.6 L6.6 5.9 L2.2 9.2 Z" fill="#000"/>
</svg>
<span class="t" style="font-size:8.6px;line-height:10.6px;left:762.43px;top:118.06px;color:#111;">А</span>
<span class="t" style="font-size:8.8px;line-height:10.8px;left:792.01px;top:117.96px;color:#111;">1</span>
<span class="t" style="font-size:8.8px;line-height:10.8px;left:816.31px;top:117.96px;color:#111;">1</span>
<span class="t" style="font-size:8.8px;line-height:10.8px;left:828.8px;top:117.96px;transform:scaleX(0.785);transform-origin:0 50%;color:#111;">53 980,6100</span>
<span class="t" style="font-size:8.8px;line-height:10.8px;left:874.5px;top:117.96px;transform:scaleX(0.763);transform-origin:0 50%;color:#111;">57 975,970</span>
<div class="a" style="left:735px;top:128.92px;width:8.8px;height:11.72px;background:#d4d0c8;box-shadow:inset -0.9px -1.1px 0 #45433f,inset 0.8px 0.8px 0 #fbfaf8;"></div>
<span class="t" style="font-size:8.6px;line-height:10.6px;left:762.48px;top:129.78px;color:#111;">Б</span>
<span class="t" style="font-size:8.8px;line-height:10.8px;left:792.01px;top:129.68px;color:#111;">2</span>
<span class="t" style="font-size:8.8px;line-height:10.8px;left:816.31px;top:129.68px;color:#111;">2</span>
<span class="t" style="font-size:8.8px;line-height:10.8px;left:828.8px;top:129.68px;transform:scaleX(0.785);transform-origin:0 50%;color:#111;">53 999,1500</span>
<span class="t" style="font-size:8.8px;line-height:10.8px;left:874.5px;top:129.68px;transform:scaleX(0.763);transform-origin:0 50%;color:#111;">57 970,870</span>
<div class="a" style="left:735px;top:140.64px;width:8.8px;height:11.72px;background:#d4d0c8;box-shadow:inset -0.9px -1.1px 0 #45433f,inset 0.8px 0.8px 0 #fbfaf8;"></div>
<span class="t" style="font-size:8.6px;line-height:10.6px;left:762.43px;top:141.5px;color:#111;">В</span>
<span class="t" style="font-size:8.8px;line-height:10.8px;left:792.01px;top:141.4px;color:#111;">3</span>
<span class="t" style="font-size:8.8px;line-height:10.8px;left:816.31px;top:141.4px;color:#111;">3</span>
<span class="t" style="font-size:8.8px;line-height:10.8px;left:828.8px;top:141.4px;transform:scaleX(0.785);transform-origin:0 50%;color:#111;">54 007,4300</span>
<span class="t" style="font-size:8.8px;line-height:10.8px;left:874.5px;top:141.4px;transform:scaleX(0.763);transform-origin:0 50%;color:#111;">58 000,950</span>
<div class="a" style="left:735px;top:152.36px;width:8.8px;height:11.72px;background:#d4d0c8;box-shadow:inset -0.9px -1.1px 0 #45433f,inset 0.8px 0.8px 0 #fbfaf8;"></div>
<span class="t" style="font-size:8.6px;line-height:10.6px;left:762.97px;top:153.22px;color:#111;">Г</span>
<span class="t" style="font-size:8.8px;line-height:10.8px;left:792.01px;top:153.12px;color:#111;">4</span>
<span class="t" style="font-size:8.8px;line-height:10.8px;left:816.31px;top:153.12px;color:#111;">4</span>
<span class="t" style="font-size:8.8px;line-height:10.8px;left:828.8px;top:153.12px;transform:scaleX(0.785);transform-origin:0 50%;color:#111;">53 997,7900</span>
<span class="t" style="font-size:8.8px;line-height:10.8px;left:874.5px;top:153.12px;transform:scaleX(0.763);transform-origin:0 50%;color:#111;">58 003,610</span>
<div class="a" style="left:735px;top:164.08px;width:8.8px;height:11.72px;background:#d4d0c8;box-shadow:inset -0.9px -1.1px 0 #45433f,inset 0.8px 0.8px 0 #fbfaf8;"></div>
<span class="t" style="font-size:8.6px;line-height:10.6px;left:762.39px;top:164.94px;color:#111;">Д</span>
<span class="t" style="font-size:8.8px;line-height:10.8px;left:792.01px;top:164.84px;color:#111;">5</span>
<span class="t" style="font-size:8.8px;line-height:10.8px;left:816.31px;top:164.84px;color:#111;">5</span>
<span class="t" style="font-size:8.8px;line-height:10.8px;left:828.8px;top:164.84px;transform:scaleX(0.785);transform-origin:0 50%;color:#111;">53 988,8900</span>
<span class="t" style="font-size:8.8px;line-height:10.8px;left:874.5px;top:164.84px;transform:scaleX(0.763);transform-origin:0 50%;color:#111;">58 006,050</span>
<div class="a" style="left:735px;top:175.8px;width:8.8px;height:11.72px;background:#d4d0c8;box-shadow:inset -0.9px -1.1px 0 #45433f,inset 0.8px 0.8px 0 #fbfaf8;"></div>
<span class="t" style="font-size:8.6px;line-height:10.6px;left:762.43px;top:176.66px;color:#111;">А</span>
<span class="t" style="font-size:8.8px;line-height:10.8px;left:792.01px;top:176.56px;color:#111;">6</span>
<span class="t" style="font-size:8.8px;line-height:10.8px;left:816.31px;top:176.56px;color:#111;">1</span>
<span class="t" style="font-size:8.8px;line-height:10.8px;left:828.8px;top:176.56px;transform:scaleX(0.785);transform-origin:0 50%;color:#111;">53 980,6100</span>
<span class="t" style="font-size:8.8px;line-height:10.8px;left:874.5px;top:176.56px;transform:scaleX(0.763);transform-origin:0 50%;color:#111;">57 975,970</span>
<div class="a" style="left:754.1px;top:117.2px;width:0.8px;height:70.32px;background:#d6d4d0;"></div>
<div class="a" style="left:775.5px;top:117.2px;width:0.8px;height:70.32px;background:#d6d4d0;"></div>
<div class="a" style="left:798.8px;top:117.2px;width:0.8px;height:70.32px;background:#d6d4d0;"></div>
<div class="a" style="left:823.3px;top:117.2px;width:0.8px;height:70.32px;background:#d6d4d0;"></div>
<div class="a" style="left:868.6px;top:117.2px;width:0.8px;height:70.32px;background:#d6d4d0;"></div>
<div class="a" style="left:907.7px;top:117.2px;width:0.8px;height:70.32px;background:#d6d4d0;"></div>
<div class="a" style="left:743.8px;top:128.42px;width:164.4px;height:0.8px;background:#d6d4d0;"></div>
<div class="a" style="left:743.8px;top:140.14px;width:164.4px;height:0.8px;background:#d6d4d0;"></div>
<div class="a" style="left:743.8px;top:151.86px;width:164.4px;height:0.8px;background:#d6d4d0;"></div>
<div class="a" style="left:743.8px;top:163.58px;width:164.4px;height:0.8px;background:#d6d4d0;"></div>
<div class="a" style="left:743.8px;top:175.3px;width:164.4px;height:0.8px;background:#d6d4d0;"></div>
<div class="a" style="left:743.8px;top:187.02px;width:164.4px;height:0.8px;background:#d6d4d0;"></div>
<div class="a" style="left:734.2px;top:103.8px;width:187.8px;height:1px;background:#4a4844;"></div>
<div class="a" style="left:908.6px;top:104.8px;width:13px;height:90.4px;background:#eceae6;"></div>
<div class="a" style="left:908.8px;top:105px;width:10.2px;height:10.2px;background:#d4d0c8;box-shadow:inset -0.8px -0.8px 0 #404040,inset 0.8px 0.8px 0 #fff,inset -1.6px -1.6px 0 #808080;"></div>
<svg class="a" style="left:908.8px;top:105px" width="10.2" height="10.2" viewBox="0 0 10.2 10.2">
<path d="M2.9 5.85 L6.7 5.85 L4.8 3.65 Z" fill="#000"/>
</svg>
<div class="a" style="left:908.8px;top:146.2px;width:10.2px;height:9.2px;background:#d4d0c8;box-shadow:inset -0.8px -0.8px 0 #404040,inset 0.8px 0.8px 0 #fff,inset -1.6px -1.6px 0 #808080;"></div>
<div class="a" style="left:908.8px;top:185.6px;width:10.2px;height:9.4px;background:#d4d0c8;box-shadow:inset -0.8px -0.8px 0 #404040,inset 0.8px 0.8px 0 #fff,inset -1.6px -1.6px 0 #808080;"></div>
<svg class="a" style="left:908.8px;top:185.6px" width="10.2" height="9.4" viewBox="0 0 10.2 9.4">
<path d="M2.9 3.55 L6.7 3.55 L4.8 5.75 Z" fill="#000"/>
</svg>
<div class="a" style="left:735px;top:195px;width:173.8px;height:11px;background:#eceae6;"></div>
<div class="a" style="left:735.2px;top:195.4px;width:10.2px;height:10.2px;background:#d4d0c8;box-shadow:inset -0.8px -0.8px 0 #404040,inset 0.8px 0.8px 0 #fff,inset -1.6px -1.6px 0 #808080;"></div>
<svg class="a" style="left:735.2px;top:195.4px" width="10.2" height="10.2" viewBox="0 0 10.2 10.2">
<path d="M5.75 3 L5.75 6.8 L3.55 4.9 Z" fill="#000"/>
</svg>
<div class="a" style="left:745.8px;top:195.4px;width:10.6px;height:10.2px;background:#d4d0c8;box-shadow:inset -0.8px -0.8px 0 #404040,inset 0.8px 0.8px 0 #fff,inset -1.6px -1.6px 0 #808080;"></div>
<div class="a" style="left:898.6px;top:195.4px;width:10px;height:10.2px;background:#d4d0c8;box-shadow:inset -0.8px -0.8px 0 #404040,inset 0.8px 0.8px 0 #fff,inset -1.6px -1.6px 0 #808080;"></div>
<svg class="a" style="left:898.6px;top:195.4px" width="10" height="10.2" viewBox="0 0 10 10.2">
<path d="M3.75 3 L3.75 6.8 L5.95 4.9 Z" fill="#000"/>
</svg>
<div class="a" style="left:908.8px;top:195px;width:12.8px;height:11px;background:#d4d0c8;"></div>
<div class="a" style="left:734.2px;top:206.4px;width:188.2px;height:1.2px;background:#6a6864;"></div>
<div class="a" style="left:921.4px;top:103.8px;width:1px;height:103px;background:#7c7a76;"></div>
<div class="a" style="left:733.8px;top:207.6px;width:29.6px;height:12.8px;background:#d4d0c8;box-shadow:inset 0.9px 0 0 #fbfaf8, inset -0.9px -0.9px 0 #55534e;"></div>
<span class="t" style="font-size:8.4px;line-height:10.4px;left:737.8px;top:209.6px;transform:scaleX(0.833);transform-origin:0 50%;color:#222;">599,99</span>
<div class="a" style="left:732.8px;top:220.5px;width:189.7px;height:2.4px;background:#c8d8f2;"></div>
<div class="a" style="left:732px;top:222.8px;width:190.5px;height:10.8px;background:linear-gradient(to bottom,rgba(20,30,80,0.07),rgba(255,255,255,0.08)),linear-gradient(to right,#c0d2f0 0%,#aac2ec 50%,#96b4e8 100%);"></div>
<svg class="a" style="left:732px;top:222.8px" width="30" height="10.8" viewBox="0 0 30 10.8">
<path d="M2.6 2.9 L5.2 5.4 L2.6 7.9 Z" fill="#111"/>
<path d="M12.6 4.2 H17.6 L15.1 6.9 Z" fill="#111"/>
</svg>
<span class="t" style="font-size:8.4px;line-height:10.4px;left:753.4px;top:223.2px;transform:scaleX(0.821);transform-origin:0 50%;color:#1c2c50;">Таблица расчётов</span>
<span class="t" style="font-size:8.6px;line-height:10.6px;left:735.4px;top:235px;transform:scaleX(0.910);transform-origin:0 50%;color:#1a2488;font-weight:bold;">Точки стояния и наведения</span>
<span class="t" style="font-size:8.6px;line-height:10.6px;left:735.6px;top:245px;transform:scaleX(0.935);transform-origin:0 50%;color:#0a0a1a;font-weight:bold;">1 стоян.</span>
<span class="t" style="font-size:8.6px;line-height:10.6px;left:771.6px;top:245px;color:#0a0a1a;font-weight:bold;">X</span>
<div class="a" style="left:778.2px;top:245.9px;width:45.8px;height:8.8px;background:#ecebe8;"></div>
<span class="t" style="font-size:8.6px;line-height:10.6px;left:829px;top:245px;color:#0a0a1a;font-weight:bold;">Y</span>
<div class="a" style="left:836.6px;top:245.9px;width:43.8px;height:8.8px;background:#ecebe8;"></div>
<span class="t" style="font-size:8.6px;line-height:10.6px;left:885.2px;top:245px;color:#0a0a1a;font-weight:bold;">Z</span>
<div class="a" style="left:892.9px;top:245.9px;width:26.3px;height:8.8px;background:#ecebe8;"></div>
<span class="t" style="font-size:8.6px;line-height:10.6px;left:735.6px;top:256.85px;transform:scaleX(0.904);transform-origin:0 50%;color:#0a0a1a;font-weight:bold;">1 навед.</span>
<span class="t" style="font-size:8.6px;line-height:10.6px;left:771.6px;top:256.85px;color:#0a0a1a;font-weight:bold;">X</span>
<div class="a" style="left:778.2px;top:257.75px;width:45.8px;height:8.8px;background:#ecebe8;"></div>
<span class="t" style="font-size:8.6px;line-height:10.6px;left:829px;top:256.85px;color:#0a0a1a;font-weight:bold;">Y</span>
<div class="a" style="left:836.6px;top:257.75px;width:43.8px;height:8.8px;background:#ecebe8;"></div>
<span class="t" style="font-size:8.6px;line-height:10.6px;left:885.2px;top:256.85px;color:#0a0a1a;font-weight:bold;">Z</span>
<div class="a" style="left:892.9px;top:257.75px;width:26.3px;height:8.8px;background:#ecebe8;"></div>
<span class="t" style="font-size:8.6px;line-height:10.6px;left:735.6px;top:268.7px;transform:scaleX(0.935);transform-origin:0 50%;color:#0a0a1a;font-weight:bold;">2 стоян.</span>
<span class="t" style="font-size:8.6px;line-height:10.6px;left:771.6px;top:268.7px;color:#0a0a1a;font-weight:bold;">X</span>
<div class="a" style="left:778.2px;top:269.6px;width:45.8px;height:8.8px;background:#ecebe8;"></div>
<span class="t" style="font-size:8.6px;line-height:10.6px;left:829px;top:268.7px;color:#0a0a1a;font-weight:bold;">Y</span>
<div class="a" style="left:836.6px;top:269.6px;width:43.8px;height:8.8px;background:#ecebe8;"></div>
<span class="t" style="font-size:8.6px;line-height:10.6px;left:885.2px;top:268.7px;color:#0a0a1a;font-weight:bold;">Z</span>
<div class="a" style="left:892.9px;top:269.6px;width:26.3px;height:8.8px;background:#ecebe8;"></div>
<span class="t" style="font-size:8.6px;line-height:10.6px;left:735.6px;top:280.55px;transform:scaleX(0.904);transform-origin:0 50%;color:#0a0a1a;font-weight:bold;">2 навед.</span>
<span class="t" style="font-size:8.6px;line-height:10.6px;left:771.6px;top:280.55px;color:#0a0a1a;font-weight:bold;">X</span>
<div class="a" style="left:778.2px;top:281.45px;width:45.8px;height:8.8px;background:#ecebe8;"></div>
<span class="t" style="font-size:8.6px;line-height:10.6px;left:829px;top:280.55px;color:#0a0a1a;font-weight:bold;">Y</span>
<div class="a" style="left:836.6px;top:281.45px;width:43.8px;height:8.8px;background:#ecebe8;"></div>
<span class="t" style="font-size:8.6px;line-height:10.6px;left:885.2px;top:280.55px;color:#0a0a1a;font-weight:bold;">Z</span>
<div class="a" style="left:892.9px;top:281.45px;width:26.3px;height:8.8px;background:#ecebe8;"></div>
<span class="t" style="font-size:8.6px;line-height:10.6px;left:735.4px;top:292.3px;transform:scaleX(0.893);transform-origin:0 50%;color:#1a2488;font-weight:bold;">Таблица расчётов</span>
<div class="a" style="left:732.6px;top:302.8px;width:189.6px;height:274.2px;background:#fff;"></div>
<div class="a" style="left:732.6px;top:302.8px;width:13.3px;height:11.9px;background:#d4d0c8;box-shadow:inset -0.9px -1.1px 0 #45433f,inset 0.8px 0.8px 0 #fbfaf8;"></div>
<span class="t" style="font-size:8.4px;line-height:10.4px;left:734px;top:304px;transform:scaleX(1.043);transform-origin:0 50%;color:#222;">№</span>
<div class="a" style="left:745.9px;top:302.8px;width:18.3px;height:11.9px;background:#d4d0c8;box-shadow:inset -0.9px -1.1px 0 #45433f,inset 0.8px 0.8px 0 #fbfaf8;"></div>
<span class="t" style="font-size:8.8px;line-height:10.8px;left:754.6px;top:303.6px;color:#333;">L</span>
<div class="a" style="left:764.2px;top:302.8px;width:21.3px;height:11.9px;background:#d4d0c8;box-shadow:inset -0.9px -1.1px 0 #45433f,inset 0.8px 0.8px 0 #fbfaf8;"></div>
<span class="t" style="font-size:8.2px;line-height:10.2px;left:765.8px;top:304.1px;transform:scaleX(0.833);transform-origin:0 50%;color:#222;">° град</span>
<div class="a" style="left:785.5px;top:302.8px;width:21.5px;height:11.9px;background:#d4d0c8;box-shadow:inset -0.9px -1.1px 0 #45433f,inset 0.8px 0.8px 0 #fbfaf8;"></div>
<span class="t" style="font-size:8.2px;line-height:10.2px;left:787.1px;top:304.1px;transform:scaleX(1.017);transform-origin:0 50%;color:#222;">&#x27; мин</span>
<div class="a" style="left:807px;top:302.8px;width:20.2px;height:11.9px;background:#d4d0c8;box-shadow:inset -0.9px -1.1px 0 #45433f,inset 0.8px 0.8px 0 #fbfaf8;"></div>
<span class="t" style="font-size:8.2px;line-height:10.2px;left:808.6px;top:304.1px;transform:scaleX(1.009);transform-origin:0 50%;color:#222;">&quot; сек</span>
<div class="a" style="left:827.2px;top:302.8px;width:40.7px;height:11.9px;background:#d4d0c8;box-shadow:inset -0.9px -1.1px 0 #45433f,inset 0.8px 0.8px 0 #fbfaf8;"></div>
<span class="t" style="font-size:8.8px;line-height:10.8px;left:844.62px;top:303.6px;color:#333;">X</span>
<div class="a" style="left:867.9px;top:302.8px;width:36.9px;height:11.9px;background:#d4d0c8;box-shadow:inset -0.9px -1.1px 0 #45433f,inset 0.8px 0.8px 0 #fbfaf8;"></div>
<span class="t" style="font-size:8.8px;line-height:10.8px;left:883.42px;top:303.6px;color:#333;">Y</span>
<div class="a" style="left:904.8px;top:302.8px;width:7.9px;height:11.9px;background:#d4d0c8;box-shadow:inset -0.9px -1.1px 0 #45433f,inset 0.8px 0.8px 0 #fbfaf8;"></div>
<div class="a" style="left:825.8px;top:314.7px;width:0.8px;height:262.3px;background:#b4b2ac;"></div>
<div class="a" style="left:827px;top:314.7px;width:0.8px;height:262.3px;background:#c8c6c0;"></div>
<div class="a" style="left:732.6px;top:314.7px;width:13.3px;height:12.17px;background:#d4d0c8;box-shadow:inset -1px -1.2px 0 #4a4844, inset 0.8px 0.8px 0 #fbfaf8;"></div>
<span class="t" style="font-size:8.8px;line-height:10.8px;left:734.2px;top:315.69px;transform:scaleX(0.858);transform-origin:0 50%;color:#222;">0</span>
<div class="a" style="left:732.6px;top:326.87px;width:13.3px;height:12.17px;background:#d4d0c8;box-shadow:inset -1px -1.2px 0 #4a4844, inset 0.8px 0.8px 0 #fbfaf8;"></div>
<span class="t" style="font-size:8.8px;line-height:10.8px;left:734.2px;top:327.86px;transform:scaleX(0.858);transform-origin:0 50%;color:#222;">1</span>
<span class="t" style="font-size:8.6px;line-height:10.6px;left:830.6px;top:327.85px;transform:scaleX(0.814);transform-origin:0 50%;color:#222;">54023,8904</span>
<div class="a" style="left:867.3px;top:327.87px;width:1.4px;height:10.17px;background:#fff;"></div>
<div class="a" style="left:0;top:0;width:904.2px;height:767px;overflow:hidden">
<span class="t" style="font-size:8.6px;line-height:10.6px;left:870.5px;top:327.85px;transform:scaleX(0.801);transform-origin:0 50%;color:#222;">58022,9909</span>
</div>
<span class="t" style="font-size:8.6px;line-height:10.6px;left:905.4px;top:327.85px;color:#222;clip-path:inset(0 0 0 2.2px);">0</span>
<div class="a" style="left:732.6px;top:339.04px;width:13.3px;height:12.17px;background:#d4d0c8;box-shadow:inset -1px -1.2px 0 #4a4844, inset 0.8px 0.8px 0 #fbfaf8;"></div>
<span class="t" style="font-size:8.8px;line-height:10.8px;left:734.2px;top:340.02px;transform:scaleX(0.858);transform-origin:0 50%;color:#222;">2</span>
<span class="t" style="font-size:8.6px;line-height:10.6px;left:830.6px;top:340.02px;transform:scaleX(0.814);transform-origin:0 50%;color:#222;">54023,2212</span>
<div class="a" style="left:867.3px;top:340.04px;width:1.4px;height:10.17px;background:#fff;"></div>
<div class="a" style="left:0;top:0;width:904.2px;height:767px;overflow:hidden">
<span class="t" style="font-size:8.6px;line-height:10.6px;left:870.5px;top:340.02px;transform:scaleX(0.801);transform-origin:0 50%;color:#222;">57986,9997</span>
</div>
<span class="t" style="font-size:8.6px;line-height:10.6px;left:905.4px;top:340.02px;color:#222;clip-path:inset(0 0 0 2.2px);">0</span>
<div class="a" style="left:732.6px;top:351.21px;width:13.3px;height:12.17px;background:#d4d0c8;box-shadow:inset -1px -1.2px 0 #4a4844, inset 0.8px 0.8px 0 #fbfaf8;"></div>
<span class="t" style="font-size:8.8px;line-height:10.8px;left:734.2px;top:352.19px;transform:scaleX(0.858);transform-origin:0 50%;color:#222;">3</span>
<span class="t" style="font-size:8.6px;line-height:10.6px;left:830.6px;top:352.19px;transform:scaleX(0.826);transform-origin:0 50%;color:#222;">54011,7517</span>
<div class="a" style="left:867.3px;top:352.21px;width:1.4px;height:10.17px;background:#fff;"></div>
<div class="a" style="left:0;top:0;width:904.2px;height:767px;overflow:hidden">
<span class="t" style="font-size:8.6px;line-height:10.6px;left:870.5px;top:352.19px;transform:scaleX(0.797);transform-origin:0 50%;color:#222;">57960,304</span>
</div>
<span class="t" style="font-size:8.6px;line-height:10.6px;left:905.4px;top:352.19px;color:#222;clip-path:inset(0 0 0 2.2px);">0</span>
<div class="a" style="left:732.6px;top:363.38px;width:13.3px;height:12.17px;background:#d4d0c8;box-shadow:inset -1px -1.2px 0 #4a4844, inset 0.8px 0.8px 0 #fbfaf8;"></div>
<span class="t" style="font-size:8.8px;line-height:10.8px;left:734.2px;top:364.37px;transform:scaleX(0.858);transform-origin:0 50%;color:#222;">4</span>
<span class="t" style="font-size:8.6px;line-height:10.6px;left:830.6px;top:364.36px;transform:scaleX(0.814);transform-origin:0 50%;color:#222;">53988,8126</span>
<div class="a" style="left:867.3px;top:364.38px;width:1.4px;height:10.17px;background:#fff;"></div>
<div class="a" style="left:0;top:0;width:904.2px;height:767px;overflow:hidden">
<span class="t" style="font-size:8.6px;line-height:10.6px;left:870.5px;top:364.36px;transform:scaleX(0.797);transform-origin:0 50%;color:#222;">57966,679</span>
</div>
<span class="t" style="font-size:8.6px;line-height:10.6px;left:905.4px;top:364.36px;color:#222;clip-path:inset(0 0 0 2.2px);">0</span>
<div class="a" style="left:732.6px;top:375.55px;width:13.3px;height:12.17px;background:#d4d0c8;box-shadow:inset -1px -1.2px 0 #4a4844, inset 0.8px 0.8px 0 #fbfaf8;"></div>
<span class="t" style="font-size:8.8px;line-height:10.8px;left:734.2px;top:376.54px;transform:scaleX(0.858);transform-origin:0 50%;color:#222;">5</span>
<div class="a" style="left:732.6px;top:387.72px;width:13.3px;height:12.17px;background:#d4d0c8;box-shadow:inset -1px -1.2px 0 #4a4844, inset 0.8px 0.8px 0 #fbfaf8;"></div>
<span class="t" style="font-size:8.8px;line-height:10.8px;left:734.2px;top:388.7px;transform:scaleX(0.858);transform-origin:0 50%;color:#222;">6</span>
<div class="a" style="left:732.6px;top:399.89px;width:13.3px;height:12.17px;background:#d4d0c8;box-shadow:inset -1px -1.2px 0 #4a4844, inset 0.8px 0.8px 0 #fbfaf8;"></div>
<span class="t" style="font-size:8.8px;line-height:10.8px;left:734.2px;top:400.88px;transform:scaleX(0.858);transform-origin:0 50%;color:#222;">7</span>
<div class="a" style="left:732.6px;top:412.06px;width:13.3px;height:12.17px;background:#d4d0c8;box-shadow:inset -1px -1.2px 0 #4a4844, inset 0.8px 0.8px 0 #fbfaf8;"></div>
<span class="t" style="font-size:8.8px;line-height:10.8px;left:734.2px;top:413.05px;transform:scaleX(0.858);transform-origin:0 50%;color:#222;">8</span>
<div class="a" style="left:732.6px;top:424.23px;width:13.3px;height:12.17px;background:#d4d0c8;box-shadow:inset -1px -1.2px 0 #4a4844, inset 0.8px 0.8px 0 #fbfaf8;"></div>
<span class="t" style="font-size:8.8px;line-height:10.8px;left:734.2px;top:425.22px;transform:scaleX(0.858);transform-origin:0 50%;color:#222;">9</span>
<div class="a" style="left:732.6px;top:436.4px;width:13.3px;height:12.17px;background:#d4d0c8;box-shadow:inset -1px -1.2px 0 #4a4844, inset 0.8px 0.8px 0 #fbfaf8;"></div>
<span class="t" style="font-size:8.8px;line-height:10.8px;left:734.2px;top:437.38px;transform:scaleX(0.879);transform-origin:0 50%;color:#222;">10</span>
<div class="a" style="left:732.6px;top:448.57px;width:13.3px;height:12.17px;background:#d4d0c8;box-shadow:inset -1px -1.2px 0 #4a4844, inset 0.8px 0.8px 0 #fbfaf8;"></div>
<span class="t" style="font-size:8.8px;line-height:10.8px;left:734.2px;top:449.56px;transform:scaleX(0.941);transform-origin:0 50%;color:#222;">11</span>
<div class="a" style="left:732.6px;top:460.74px;width:13.3px;height:12.17px;background:#d4d0c8;box-shadow:inset -1px -1.2px 0 #4a4844, inset 0.8px 0.8px 0 #fbfaf8;"></div>
<span class="t" style="font-size:8.8px;line-height:10.8px;left:734.2px;top:461.73px;transform:scaleX(0.879);transform-origin:0 50%;color:#222;">12</span>
<div class="a" style="left:732.6px;top:472.91px;width:13.3px;height:12.17px;background:#d4d0c8;box-shadow:inset -1px -1.2px 0 #4a4844, inset 0.8px 0.8px 0 #fbfaf8;"></div>
<span class="t" style="font-size:8.8px;line-height:10.8px;left:734.2px;top:473.89px;transform:scaleX(0.879);transform-origin:0 50%;color:#222;">13</span>
<div class="a" style="left:732.6px;top:485.08px;width:13.3px;height:12.17px;background:#d4d0c8;box-shadow:inset -1px -1.2px 0 #4a4844, inset 0.8px 0.8px 0 #fbfaf8;"></div>
<span class="t" style="font-size:8.8px;line-height:10.8px;left:734.2px;top:486.06px;transform:scaleX(0.879);transform-origin:0 50%;color:#222;">14</span>
<div class="a" style="left:732.6px;top:497.25px;width:13.3px;height:12.17px;background:#d4d0c8;box-shadow:inset -1px -1.2px 0 #4a4844, inset 0.8px 0.8px 0 #fbfaf8;"></div>
<span class="t" style="font-size:8.8px;line-height:10.8px;left:734.2px;top:498.24px;transform:scaleX(0.879);transform-origin:0 50%;color:#222;">15</span>
<div class="a" style="left:732.6px;top:509.42px;width:13.3px;height:12.17px;background:#d4d0c8;box-shadow:inset -1px -1.2px 0 #4a4844, inset 0.8px 0.8px 0 #fbfaf8;"></div>
<span class="t" style="font-size:8.8px;line-height:10.8px;left:734.2px;top:510.4px;transform:scaleX(0.879);transform-origin:0 50%;color:#222;">16</span>
<div class="a" style="left:732.6px;top:521.59px;width:13.3px;height:12.17px;background:#d4d0c8;box-shadow:inset -1px -1.2px 0 #4a4844, inset 0.8px 0.8px 0 #fbfaf8;"></div>
<span class="t" style="font-size:8.8px;line-height:10.8px;left:734.2px;top:522.57px;transform:scaleX(0.879);transform-origin:0 50%;color:#222;">17</span>
<div class="a" style="left:732.6px;top:533.76px;width:13.3px;height:12.17px;background:#d4d0c8;box-shadow:inset -1px -1.2px 0 #4a4844, inset 0.8px 0.8px 0 #fbfaf8;"></div>
<span class="t" style="font-size:8.8px;line-height:10.8px;left:734.2px;top:534.75px;transform:scaleX(0.879);transform-origin:0 50%;color:#222;">18</span>
<div class="a" style="left:732.6px;top:545.93px;width:13.3px;height:12.17px;background:#d4d0c8;box-shadow:inset -1px -1.2px 0 #4a4844, inset 0.8px 0.8px 0 #fbfaf8;"></div>
<span class="t" style="font-size:8.8px;line-height:10.8px;left:734.2px;top:546.91px;transform:scaleX(0.879);transform-origin:0 50%;color:#222;">19</span>
<div class="a" style="left:732.6px;top:558.1px;width:13.3px;height:12.17px;background:#d4d0c8;box-shadow:inset -1px -1.2px 0 #4a4844, inset 0.8px 0.8px 0 #fbfaf8;"></div>
<span class="t" style="font-size:8.8px;line-height:10.8px;left:734.2px;top:559.09px;transform:scaleX(0.879);transform-origin:0 50%;color:#222;">20</span>
<div class="a" style="left:732.6px;top:570.27px;width:13.3px;height:6.73px;background:#d4d0c8;"></div>
<span class="t" style="font-size:8.8px;line-height:10.8px;left:734.2px;top:571.25px;transform:scaleX(0.879);transform-origin:0 50%;color:#222;clip-path:inset(0 0 5.06px 0);">21</span>
<div class="a" style="left:745.9px;top:315.1px;width:17.9px;height:11.17px;background:#0a246a;"></div>
<div class="a" style="left:763.8px;top:314.7px;width:0.8px;height:262.3px;background:#d6d4d0;"></div>
<div class="a" style="left:785.1px;top:314.7px;width:0.8px;height:262.3px;background:#d6d4d0;"></div>
<div class="a" style="left:806.6px;top:314.7px;width:0.8px;height:262.3px;background:#d6d4d0;"></div>
<div class="a" style="left:867.5px;top:314.7px;width:0.8px;height:262.3px;background:#d6d4d0;"></div>
<div class="a" style="left:904.4px;top:314.7px;width:0.8px;height:262.3px;background:#d6d4d0;"></div>
<div class="a" style="left:745.9px;top:326.37px;width:166.8px;height:0.8px;background:#d6d4d0;"></div>
<div class="a" style="left:745.9px;top:338.54px;width:166.8px;height:0.8px;background:#d6d4d0;"></div>
<div class="a" style="left:745.9px;top:350.71px;width:166.8px;height:0.8px;background:#d6d4d0;"></div>
<div class="a" style="left:745.9px;top:362.88px;width:166.8px;height:0.8px;background:#d6d4d0;"></div>
<div class="a" style="left:745.9px;top:375.05px;width:166.8px;height:0.8px;background:#d6d4d0;"></div>
<div class="a" style="left:745.9px;top:387.22px;width:166.8px;height:0.8px;background:#d6d4d0;"></div>
<div class="a" style="left:745.9px;top:399.39px;width:166.8px;height:0.8px;background:#d6d4d0;"></div>
<div class="a" style="left:745.9px;top:411.56px;width:166.8px;height:0.8px;background:#d6d4d0;"></div>
<div class="a" style="left:745.9px;top:423.73px;width:166.8px;height:0.8px;background:#d6d4d0;"></div>
<div class="a" style="left:745.9px;top:435.9px;width:166.8px;height:0.8px;background:#d6d4d0;"></div>
<div class="a" style="left:745.9px;top:448.07px;width:166.8px;height:0.8px;background:#d6d4d0;"></div>
<div class="a" style="left:745.9px;top:460.24px;width:166.8px;height:0.8px;background:#d6d4d0;"></div>
<div class="a" style="left:745.9px;top:472.41px;width:166.8px;height:0.8px;background:#d6d4d0;"></div>
<div class="a" style="left:745.9px;top:484.58px;width:166.8px;height:0.8px;background:#d6d4d0;"></div>
<div class="a" style="left:745.9px;top:496.75px;width:166.8px;height:0.8px;background:#d6d4d0;"></div>
<div class="a" style="left:745.9px;top:508.92px;width:166.8px;height:0.8px;background:#d6d4d0;"></div>
<div class="a" style="left:745.9px;top:521.09px;width:166.8px;height:0.8px;background:#d6d4d0;"></div>
<div class="a" style="left:745.9px;top:533.26px;width:166.8px;height:0.8px;background:#d6d4d0;"></div>
<div class="a" style="left:745.9px;top:545.43px;width:166.8px;height:0.8px;background:#d6d4d0;"></div>
<div class="a" style="left:745.9px;top:557.6px;width:166.8px;height:0.8px;background:#d6d4d0;"></div>
<div class="a" style="left:745.9px;top:569.77px;width:166.8px;height:0.8px;background:#d6d4d0;"></div>
<div class="a" style="left:912.7px;top:302.8px;width:9.6px;height:274.2px;background:#eceae6;"></div>
<div class="a" style="left:912.9px;top:303.2px;width:9.4px;height:10px;background:#d4d0c8;box-shadow:inset -0.8px -0.8px 0 #404040,inset 0.8px 0.8px 0 #fff,inset -1.6px -1.6px 0 #808080;"></div>
<svg class="a" style="left:912.9px;top:303.2px" width="9.4" height="10" viewBox="0 0 9.4 10">
<path d="M2.5 5.75 L6.3 5.75 L4.4 3.55 Z" fill="#000"/>
</svg>
<div class="a" style="left:912.9px;top:313px;width:9.4px;height:9.6px;background:#d4d0c8;box-shadow:inset -0.8px -0.8px 0 #404040,inset 0.8px 0.8px 0 #fff,inset -1.6px -1.6px 0 #808080;"></div>
<div class="a" style="left:912.9px;top:566.4px;width:9.4px;height:10px;background:#d4d0c8;box-shadow:inset -0.8px -0.8px 0 #404040,inset 0.8px 0.8px 0 #fff,inset -1.6px -1.6px 0 #808080;"></div>
<svg class="a" style="left:912.9px;top:566.4px" width="9.4" height="10" viewBox="0 0 9.4 10">
<path d="M2.5 3.85 L6.3 3.85 L4.4 6.05 Z" fill="#000"/>
</svg>
<div class="a" style="left:731px;top:577px;width:191.5px;height:1.4px;background:#a9c6ee;"></div>
<div class="a" style="left:732px;top:579.4px;width:190.5px;height:10px;background:linear-gradient(to bottom,rgba(20,30,80,0.07),rgba(255,255,255,0.08)),linear-gradient(to right,#c0d2f0 0%,#aac2ec 50%,#96b4e8 100%);"></div>
<svg class="a" style="left:732px;top:579.4px" width="30" height="10" viewBox="0 0 30 10">
<path d="M2.6 2.5 L5.2 5 L2.6 7.5 Z" fill="#111"/>
<path d="M12.6 3.8 H17.6 L15.1 6.5 Z" fill="#111"/>
</svg>
<span class="t" style="font-size:8.4px;line-height:10.4px;left:753.4px;top:579.4px;transform:scaleX(0.852);transform-origin:0 50%;color:#1c2c50;">Описание границ земельного участка</span>
<div class="a" style="left:733.1px;top:590.2px;width:189.1px;height:35.6px;background:#fff;box-shadow:inset 1px 1px 0 #55534e;"></div>
<div class="a" style="left:733.9px;top:591px;width:22.8px;height:10.4px;background:#d4d0c8;box-shadow:inset -0.9px -1.1px 0 #45433f,inset 0.8px 0.8px 0 #fbfaf8;outline:0.6px solid #6a6864;outline-offset:-0.6px;"></div>
<span class="t" style="font-size:8.2px;line-height:10.2px;left:735.1px;top:591.5px;transform:scaleX(0.958);transform-origin:0 50%;color:#222;">Буква</span>
<div class="a" style="left:756.7px;top:591px;width:24.8px;height:10.4px;background:#d4d0c8;box-shadow:inset -0.9px -1.1px 0 #45433f,inset 0.8px 0.8px 0 #fbfaf8;outline:0.6px solid #6a6864;outline-offset:-0.6px;"></div>
<span class="t" style="font-size:8.2px;line-height:10.2px;left:760.69px;top:591.5px;transform:scaleX(0.840);transform-origin:50% 50%;color:#222;">Угол</span>
<div class="a" style="left:781.5px;top:591px;width:83.1px;height:10.4px;background:#d4d0c8;box-shadow:inset -0.9px -1.1px 0 #45433f,inset 0.8px 0.8px 0 #fbfaf8;outline:0.6px solid #6a6864;outline-offset:-0.6px;"></div>
<span class="t" style="font-size:8.2px;line-height:10.2px;left:804.19px;top:591.5px;transform:scaleX(0.840);transform-origin:50% 50%;color:#222;">Описание</span>
<div class="a" style="left:864.6px;top:591px;width:46px;height:10.4px;background:#d4d0c8;box-shadow:inset -0.9px -1.1px 0 #45433f,inset 0.8px 0.8px 0 #fbfaf8;outline:0.6px solid #6a6864;outline-offset:-0.6px;"></div>
<span class="t" style="font-size:8.2px;line-height:10.2px;left:871.77px;top:591.5px;transform:scaleX(0.840);transform-origin:50% 50%;color:#222;">Субъект</span>
<span class="t" style="font-size:8.8px;line-height:10.8px;left:742.37px;top:603.1px;color:#222;">А</span>
<span class="t" style="font-size:8.6px;line-height:10.6px;left:754px;top:603.2px;transform:scaleX(0.821);transform-origin:100% 50%;color:#222;">180,00</span>
<span class="t" style="font-size:8.6px;line-height:10.6px;left:783.7px;top:603.2px;transform:scaleX(0.829);transform-origin:0 50%;color:#222;">Землі загального корист</span>
<div class="a" style="left:756.3px;top:601.4px;width:0.8px;height:12.4px;background:#d6d4d0;"></div>
<div class="a" style="left:781.1px;top:601.4px;width:0.8px;height:12.4px;background:#d6d4d0;"></div>
<div class="a" style="left:864.2px;top:601.4px;width:0.8px;height:12.4px;background:#d6d4d0;"></div>
<div class="a" style="left:910px;top:591px;width:11.4px;height:22.8px;background:#eceae6;"></div>
<div class="a" style="left:910.6px;top:591px;width:10.4px;height:10.4px;background:#d4d0c8;box-shadow:inset -0.8px -0.8px 0 #404040,inset 0.8px 0.8px 0 #fff,inset -1.6px -1.6px 0 #808080;"></div>
<svg class="a" style="left:910.6px;top:591px" width="10.4" height="10.4" viewBox="0 0 10.4 10.4">
<path d="M3 5.95 L6.8 5.95 L4.9 3.75 Z" fill="#000"/>
</svg>
<div class="a" style="left:910.6px;top:604px;width:10.4px;height:9.8px;background:#d4d0c8;box-shadow:inset -0.8px -0.8px 0 #404040,inset 0.8px 0.8px 0 #fff,inset -1.6px -1.6px 0 #808080;"></div>
<svg class="a" style="left:910.6px;top:604px" width="10.4" height="9.8" viewBox="0 0 10.4 9.8">
<path d="M3 3.75 L6.8 3.75 L4.9 5.95 Z" fill="#000"/>
</svg>
<div class="a" style="left:733.9px;top:613.8px;width:176.2px;height:11.2px;background:#eceae6;"></div>
<div class="a" style="left:734.2px;top:614px;width:9.2px;height:10.6px;background:#d4d0c8;box-shadow:inset -0.8px -0.8px 0 #404040,inset 0.8px 0.8px 0 #fff,inset -1.6px -1.6px 0 #808080;"></div>
<svg class="a" style="left:734.2px;top:614px" width="9.2" height="10.6" viewBox="0 0 9.2 10.6">
<path d="M5.25 3.2 L5.25 7 L3.05 5.1 Z" fill="#000"/>
</svg>
<div class="a" style="left:743.6px;top:614px;width:10px;height:10.6px;background:#d4d0c8;box-shadow:inset -0.8px -0.8px 0 #404040,inset 0.8px 0.8px 0 #fff,inset -1.6px -1.6px 0 #808080;"></div>
<div class="a" style="left:900px;top:614px;width:10px;height:10.6px;background:#d4d0c8;box-shadow:inset -0.8px -0.8px 0 #404040,inset 0.8px 0.8px 0 #fff,inset -1.6px -1.6px 0 #808080;"></div>
<svg class="a" style="left:900px;top:614px" width="10" height="10.6" viewBox="0 0 10 10.6">
<path d="M3.75 3.2 L3.75 7 L5.95 5.1 Z" fill="#000"/>
</svg>
<div class="a" style="left:910.2px;top:613.8px;width:11.2px;height:11.2px;background:#d4d0c8;"></div>
<span class="t" style="font-size:8.8px;line-height:10.8px;left:738.4px;top:627.7px;transform:scaleX(0.815);transform-origin:0 50%;color:#222;">Смежество</span>
<div class="a" style="left:778.2px;top:627.6px;width:27px;height:10px;background:#fff;"></div>
<span class="t" style="font-size:8.6px;line-height:10.6px;left:779.4px;top:627.8px;color:#222;">А</span>
<div class="a" style="left:805.2px;top:627.6px;width:86.8px;height:10px;background:#c9c6be;"></div>
<span class="t" style="font-size:8.8px;line-height:10.8px;left:811.4px;top:627.7px;transform:scaleX(0.836);transform-origin:0 50%;color:#222;">Угол поворота стрелки</span>
<div class="a" style="left:892px;top:627.6px;width:27.4px;height:10px;background:#fff;"></div>
<span class="t" style="font-size:8.8px;line-height:10.8px;left:891.68px;top:627.7px;transform:scaleX(0.803);transform-origin:100% 50%;color:#222;">180,00</span>
<span class="t" style="font-size:8.8px;line-height:10.8px;left:738.4px;top:638.7px;transform:scaleX(0.802);transform-origin:0 50%;color:#222;">Опис. зем.</span>
<div class="a" style="left:778.2px;top:638.6px;width:141.2px;height:10px;background:#fff;"></div>
<span class="t" style="font-size:8.6px;line-height:10.6px;left:779.2px;top:638.8px;transform:scaleX(0.835);transform-origin:0 50%;color:#222;">Землі загального користування</span>
<span class="t" style="font-size:8.8px;line-height:10.8px;left:738.4px;top:649.7px;transform:scaleX(0.831);transform-origin:0 50%;color:#222;">Ф.И.О.</span>
<div class="a" style="left:778.2px;top:649.6px;width:141.2px;height:10px;background:#fff;"></div>
<span class="t" style="font-size:8.8px;line-height:10.8px;left:738.4px;top:660.7px;transform:scaleX(0.810);transform-origin:0 50%;color:#222;">Адрес</span>
<div class="a" style="left:778.2px;top:660.6px;width:141.2px;height:10px;background:#fff;"></div>
<span class="t" style="font-size:8.6px;line-height:10.6px;left:779.2px;top:660.8px;transform:scaleX(0.805);transform-origin:0 50%;color:#222;">вул. Попова</span>
<div class="a" style="left:778.2px;top:638.2px;width:141.2px;height:0.8px;background:#d6d4ce;"></div>
<div class="a" style="left:778.2px;top:649.2px;width:141.2px;height:0.8px;background:#d6d4ce;"></div>
<div class="a" style="left:778.2px;top:660.2px;width:141.2px;height:0.8px;background:#d6d4ce;"></div>
<div class="a" style="left:731px;top:672.6px;width:191.5px;height:1.4px;background:#8c8a84;"></div>
<div class="a" style="left:101px;top:674px;width:821.5px;height:12px;background:#d4d0c8;"></div>
<div class="a" style="left:101px;top:675px;width:63.4px;height:10.6px;box-shadow:inset 0.9px 0.9px 0 #8c8a84, inset -0.9px -0.9px 0 #f8f6f2;"></div>
<div class="a" style="left:166px;top:675px;width:50px;height:10.6px;box-shadow:inset 0.9px 0.9px 0 #8c8a84, inset -0.9px -0.9px 0 #f8f6f2;"></div>
<div class="a" style="left:217.6px;top:675px;width:75.2px;height:10.6px;box-shadow:inset 0.9px 0.9px 0 #8c8a84, inset -0.9px -0.9px 0 #f8f6f2;"></div>
<div class="a" style="left:294.4px;top:675px;width:76.2px;height:10.6px;box-shadow:inset 0.9px 0.9px 0 #8c8a84, inset -0.9px -0.9px 0 #f8f6f2;"></div>
<div class="a" style="left:372px;top:675px;width:158.6px;height:10.6px;box-shadow:inset 0.9px 0.9px 0 #8c8a84, inset -0.9px -0.9px 0 #f8f6f2;"></div>
<div class="a" style="left:531.6px;top:675px;width:394.4px;height:10.6px;box-shadow:inset 0.9px 0.9px 0 #8c8a84, inset -0.9px -0.9px 0 #f8f6f2;"></div>
<span class="t" style="font-size:7.8px;line-height:9.8px;left:102.2px;top:675.8px;transform:scaleX(0.872);transform-origin:0 50%;color:#111;">Масштаб 1:500</span>
<span class="t" style="font-size:7.8px;line-height:9.8px;left:167.2px;top:675.8px;transform:scaleX(0.901);transform-origin:0 50%;color:#111;">S = 599,99</span>
<span class="t" style="font-size:7.8px;line-height:9.8px;left:218.6px;top:675.8px;transform:scaleX(0.933);transform-origin:0 50%;color:#111;">S (контр.) = 599,99</span>
<span class="t" style="font-size:7.8px;line-height:9.8px;left:296.2px;top:675.8px;transform:scaleX(0.896);transform-origin:0 50%;color:#111;">Периметр = 100,86</span>
<span class="t" style="font-size:7.8px;line-height:9.8px;left:373.4px;top:675.8px;transform:scaleX(0.840);transform-origin:0 50%;color:#111;">Смещение:</span>
<span class="t" style="font-size:7.8px;line-height:9.8px;left:533.6px;top:675.8px;transform:scaleX(0.910);transform-origin:0 50%;color:#111;">Площадь:955,25</span>
<div class="a" style="left:922.5px;top:670px;width:6px;height:20px;background:#fff;"></div>
<svg class="a" style="left:380px;top:76px" width="18" height="28" viewBox="0 0 18 28">
<path d="M2.1 1.9 L2 19.7 L5.6 15.7 L10.1 25.5 L12.9 24 L8.7 14.4 L14.2 13.9 Z" fill="#fff" stroke="#111" stroke-width="1.25" stroke-linejoin="miter"/>
</svg>
</div></body></html>
